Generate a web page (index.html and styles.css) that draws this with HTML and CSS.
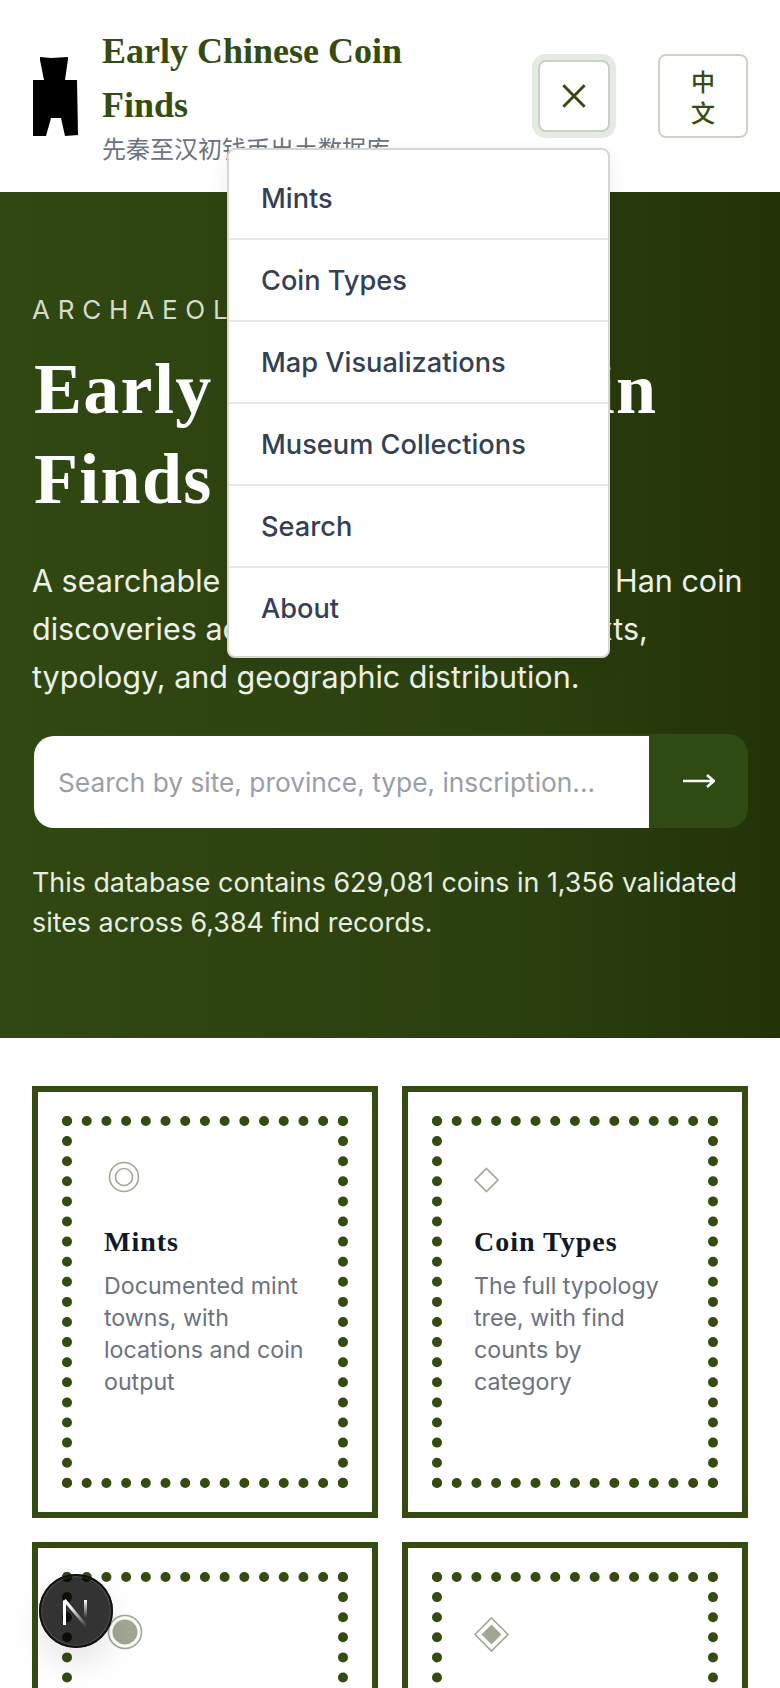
FILE: index.html
```html
<!DOCTYPE html>
<html lang="en">
<head>
<meta charset="UTF-8" />
<title>Early Chinese Coin Finds</title>
<link rel="stylesheet" href="styles.css">
</head>
<body>

<header class="site-header">
	<svg class="logo" viewBox="0 0 46 81" aria-hidden="true">
		<path d="M8 1 L19 2 L36 1 L36 3 L33 24 L45 24 L46 79 L33 80 L29 62 L19 62 L14 80 L1 80 L1 24 L12 24 L8 4 Z" />
	</svg>
	<div class="brand">
		<div class="brand-title">Early Chinese Coin Finds</div>
		<div class="brand-sub">先秦至汉初钱币出土数据库</div>
	</div>
	<button class="menu-btn" type="button">
		<svg viewBox="0 0 24 24"><path d="M4 4 L20 20 M20 4 L4 20" /></svg>
	</button>
	<button class="lang-btn" type="button">中文</button>

	<nav class="menu">
		<a href="#">Mints</a>
		<a href="#">Coin Types</a>
		<a href="#">Map Visualizations</a>
		<a href="#">Museum Collections</a>
		<a href="#">Search</a>
		<a href="#">About</a>
	</nav>
</header>

<section class="hero">
	<div class="eyebrow">ARCHAEOLOGICAL DATABASE</div>
	<h1>Early Chinese Coin Finds</h1>
	<p class="lead">A searchable index of pre-Qin and early Han coin discoveries across China, with script texts, typology, and geographic distribution.</p>
	<form class="search">
		<input type="text" placeholder="Search by site, province, type, inscription..." />
		<button type="button">
			<svg viewBox="0 0 32 14"><path d="M0 7 H31 M24 1 L31 7 L24 13" /></svg>
		</button>
	</form>
	<p class="stats">This database contains 629,081 coins in 1,356 validated sites across 6,384 find records.</p>
</section>

<section class="cards">
	<a class="card" href="#">
		<div class="card-inner">
			<svg class="card-icon" viewBox="0 0 44 44">
				<circle cx="20" cy="19" r="14.5" />
				<circle cx="20" cy="19" r="8.5" />
			</svg>
			<h3>Mints</h3>
			<p>Documented mint towns, with locations and coin output</p>
		</div>
	</a>
	<a class="card" href="#">
		<div class="card-inner">
			<svg class="card-icon" viewBox="0 0 44 44">
				<path d="M12.5 10.5 L24 22 L12.5 33.500 L1 22 Z" />
			</svg>
			<h3>Coin Types</h3>
			<p>The full typology tree, with find counts by category</p>
		</div>
	</a>
	<a class="card" href="#">
		<div class="card-inner">
			<svg class="card-icon" viewBox="0 0 44 44">
				<circle cx="21" cy="18" r="16.500" />
				<circle class="solid" cx="21" cy="18" r="12.500" />
			</svg>
			<h3>Map Visualizations</h3>
			<p>Find distributions across provinces and periods</p>
		</div>
	</a>
	<a class="card" href="#">
		<div class="card-inner">
			<svg class="card-icon" viewBox="0 0 44 44">
				<path d="M17.500 4 L34 20.500 L17.500 37 L1 20.500 Z" />
				<path class="solid" d="M17.500 10.500 L27.500 20.500 L17.500 30.500 L7.500 20.500 Z" />
			</svg>
			<h3>About</h3>
			<p>Sources, methods and how the data was validated</p>
		</div>
	</a>
</section>

<div class="dev-badge">
	<svg viewBox="0 0 70 70">
		<defs>
			<linearGradient id="nFade" gradientUnits="userSpaceOnUse" x1="30" y1="30" x2="46" y2="50">
				<stop offset="0" stop-color="#fff" />
				<stop offset="1" stop-color="#fff" stop-opacity="0" />
			</linearGradient>
			<linearGradient id="nFade2" gradientUnits="userSpaceOnUse" x1="44" y1="24" x2="44" y2="42">
				<stop offset="0" stop-color="#fff" />
				<stop offset="1" stop-color="#fff" stop-opacity="0" />
			</linearGradient>
		</defs>
		<path class="dev-n dev-n-solid" d="M23.500 49 V24.500" />
		<path class="dev-n" stroke="url(#nFade)" d="M23.500 24 L46 51" />
		<path class="dev-n" stroke="url(#nFade2)" d="M44.500 24 V42" />
	</svg>
</div>

</body>
</html>
```

FILE: styles.css
```css
* {
	box-sizing: border-box;
}
html, body {
	margin: 0;
	padding: 0;
}
body {
	height: 1688px;
	overflow: hidden;
	background-color: #fff;
	color: #111827;
	font-family: "Inter", "Noto Sans CJK SC", sans-serif;
}
.site-header {
	position: relative;
	display: flex;
	align-items: center;
	height: 192px;
	padding: 0 32px;
}
.logo {
	flex: none;
	width: 46px;
	height: 81px;
	margin-right: 24px;
}
.brand {
	flex: none;
	width: 340px;
	margin: -5px 96px 0 0;
}
.brand-title {
	color: #344c11;
	font-family: "Liberation Serif", serif;
	font-size: 36px;
	font-weight: bold;
	line-height: 54px;
}
.brand-sub {
	color: #6b7280;
	font-family: "Noto Sans CJK SC", sans-serif;
	font-size: 24px;
	line-height: 32px;
}
.menu-btn {
	flex: none;
	width: 72px;
	height: 72px;
	margin-right: 48px;
	padding: 0;
	border: 2px solid #c9d1c3;
	border-radius: 8px;
	background-color: #fff;
	box-shadow: 0 0 0 6px #e4ebe3;
}
.menu-btn svg {
	display: block;
	width: 32px;
	height: 32px;
	margin: 0 auto;
}
.menu-btn path {
	fill: none;
	stroke: #344c11;
	stroke-width: 2.2;
}
.lang-btn {
	flex: none;
	width: 90px;
	height: 84px;
	padding: 0 28px;
	border: 2px solid #cfd1c5;
	border-radius: 8px;
	background-color: #fff;
	color: #344c11;
	font-family: "Noto Sans CJK SC", sans-serif;
	font-size: 24px;
	font-weight: 500;
	line-height: 31px;
}
.menu {
	position: absolute;
	top: 148px;
	left: 227px;
	z-index: 5;
	width: 383px;
	padding: 8px 0 6px;
	border: 2px solid #d6d8cf;
	border-radius: 8px;
	background-color: #fff;
	box-shadow: 0 8px 20px rgba(0, 0, 0, 0.08);
}
.menu a {
	display: block;
	height: 82px;
	padding-left: 32px;
	border-bottom: 2px solid #e8e9e5;
	color: #344055;
	font-size: 27.200px;
	font-weight: 500;
	line-height: 82px;
	text-decoration: none;
}
.menu a:last-child {
	border-bottom: 0;
}
.hero {
	height: 846px;
	padding: 96px 32px 0;
	background: linear-gradient(90deg, #304812 0%, #2b400f 65%, #223308 100%);
	color: #fff;
}
.eyebrow {
	color: #d5dccb;
	font-size: 26px;
	letter-spacing: 7.800px;
	line-height: 44px;
	white-space: nowrap;
}
.hero h1 {
	margin: 12px 0 0 2px;
	font-family: "Liberation Serif", serif;
	font-size: 72px;
	font-weight: bold;
	letter-spacing: 1.300px;
	line-height: 90px;
}
.lead {
	margin: 33px 0 0;
	color: #eef1e8;
	font-size: 30.500px;
	line-height: 48px;
}
.search {
	display: flex;
	height: 94px;
	margin-top: 33px;
	border-radius: 20px;
	background-color: #304a14;
}
.search input {
	flex: 1;
	min-width: 0;
	height: 92px;
	margin: 2px 0 0 2px;
	padding: 0 24px;
	border: 0;
	border-radius: 20px 0 0 20px;
	background-color: #fff;
	font-family: inherit;
	font-size: 26.300px;
}
.search input::placeholder {
	color: #9b9ea6;
}
.search button {
	flex: none;
	width: 99px;
	padding: 0;
	border: 0;
	background: none;
}
.search svg {
	display: block;
	width: 32px;
	height: 14px;
	margin: 0 auto;
}
.search path {
	fill: none;
	stroke: #fff;
	stroke-width: 2.500;
}
.stats {
	margin: 34px 0 0;
	color: #e8eee0;
	font-size: 26.850px;
	line-height: 40px;
}
.cards {
	display: grid;
	grid-template-columns: 1fr 1fr;
	gap: 24px;
	padding: 48px 32px 0;
}
.card {
	display: block;
	height: 432px;
	padding: 24px;
	border: 6px solid #344c11;
	color: inherit;
	text-decoration: none;
}
.card-inner {
	height: 372px;
	padding: 32px 30px 0 32px;
	border: 10px dotted #344c11;
}
.card-icon {
	display: block;
	width: 44px;
	height: 44px;
	overflow: visible;
}
.card-icon circle, .card-icon path {
	fill: none;
	stroke: #a0a893;
	stroke-width: 1.600;
}
.card-icon .solid {
	fill: #a0a893;
	stroke: none;
}
.card h3 {
	margin: 22px 0 0;
	font-family: "Liberation Serif", serif;
	font-size: 28px;
	font-weight: bold;
	letter-spacing: 1px;
	line-height: 36px;
}
.card p {
	margin: 10px 0 0;
	color: #6b7280;
	font-size: 23.200px;
	line-height: 32px;
}
.dev-badge {
	position: fixed;
	left: 39px;
	top: 1574px;
	z-index: 10;
	width: 74px;
	height: 74px;
	border: 2px solid #111;
	border-radius: 50%;
	backdrop-filter: brightness(0.2);
	box-shadow: inset 0 0 0 1px rgba(255, 255, 255, 0.15), 0 16px 32px rgba(0, 0, 0, 0.1);
}
.dev-badge svg {
	display: block;
	width: 70px;
	height: 70px;
}
.dev-n {
	fill: none;
	stroke-width: 3;
}
.dev-n-solid {
	stroke: #fff;
}
```
